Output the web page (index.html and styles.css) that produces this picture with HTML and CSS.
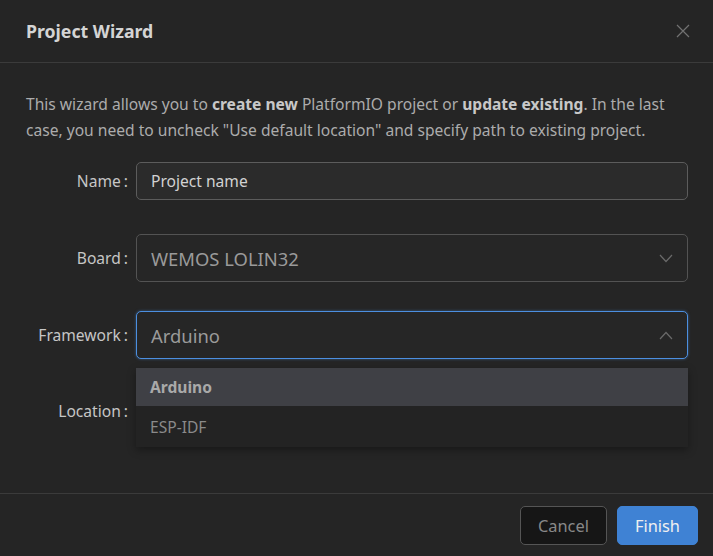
FILE: index.html
```html
<!DOCTYPE html>
<html lang="en">
<head>
    <meta charset="UTF-8" />
    <title>Project Wizard</title>
    <link rel="stylesheet" href="styles.css">
</head>
<body>
    <div class="modal">
        <div class="modal-header">
            <span class="modal-title">Project Wizard</span>
            <svg class="close-icon" width="14" height="14" viewBox="0 0 14 14">
                <path d="M1 1 L13 13 M13 1 L1 13" stroke="#727272" stroke-width="1.2" fill="none"/>
            </svg>
        </div>

        <div class="modal-body">
            <p class="intro">This wizard allows you to <b>create new</b> PlatformIO project or <b>update existing</b>. In the last case, you need to uncheck "Use default location" and specify path to existing project.</p>

            <div class="form">
                <div class="form-item item-name">
                    <label class="label">Name<span class="colon">:</span></label>
                    <div class="field">
                        <div class="input">Project name</div>
                    </div>
                </div>

                <div class="form-item item-board">
                    <label class="label">Board<span class="colon">:</span></label>
                    <div class="field">
                        <div class="select">
                            <span>WEMOS LOLIN32</span>
                            <svg width="14" height="9" viewBox="0 0 14 9"><path d="M1 1 L7 7.5 L13 1" stroke="#6a6a6a" stroke-width="1.2" fill="none"/></svg>
                        </div>
                    </div>
                </div>

                <div class="form-item item-framework">
                    <label class="label">Framework<span class="colon">:</span></label>
                    <div class="field">
                        <div class="select open">
                            <span>Arduino</span>
                            <svg width="14" height="9" viewBox="0 0 14 9"><path d="M1 8 L7 1.5 L13 8" stroke="#6a6a6a" stroke-width="1.2" fill="none"/></svg>
                        </div>
                        <ul class="dropdown">
                            <li class="active">Arduino</li>
                            <li>ESP-IDF</li>
                        </ul>
                    </div>
                </div>

                <div class="form-item">
                    <label class="label">Location<span class="colon">:</span></label>
                    <div class="field">
                        <div class="input"></div>
                    </div>
                </div>
            </div>
        </div>

        <div class="modal-footer">
            <button class="btn">Cancel</button>
            <button class="btn btn-primary">Finish</button>
        </div>
    </div>
</body>
</html>
```

FILE: styles.css
```css
body {
    margin: 0;
    background: #252525;
    font-family: "Noto Sans", "Open Sans", sans-serif;
    color: #b4b4b4;
}
.modal {
    width: 713px;
    height: 556px;
    display: flex;
    flex-direction: column;
}
.modal-header {
    height: 63px;
    border-bottom: 1px solid #3b3b3b;
    display: flex;
    align-items: center;
    justify-content: space-between;
    padding: 0 23px 0 26px;
    box-sizing: border-box;
}
.modal-title {
    font-size: 17.7px;
    font-weight: bold;
    color: #d4d4d4;
}
.modal-body {
    flex: 1;
    padding: 28px 25px 0 26px;
    overflow: hidden;
}
.intro {
    margin: 0 0 19px;
    font-size: 15.6px;
    line-height: 26px;
    color: #acacac;
}
.intro b {
    color: #c8c8c8;
}
.form-item {
    display: grid;
    grid-template-columns: 102px 1fr;
    column-gap: 8px;
    align-items: center;
}
.item-name {
    margin-bottom: 34px;
}
.item-board {
    margin-bottom: 29px;
}
.item-framework {
    margin-bottom: 33px;
}
.label {
    text-align: right;
    font-size: 15.6px;
    color: #c6c6c6;
}
.colon {
    margin-left: 3px;
}
.field {
    position: relative;
}
.input {
    height: 38px;
    box-sizing: border-box;
    border: 1px solid #5c5c5c;
    border-radius: 5px;
    background: #2b2b2b;
    padding: 0 14px;
    display: flex;
    align-items: center;
    font-size: 15.6px;
    color: #d2d2d2;
}
.select {
    height: 48px;
    box-sizing: border-box;
    border: 1px solid #535353;
    border-radius: 5px;
    background: #262626;
    padding: 0 14px;
    display: flex;
    align-items: center;
    justify-content: space-between;
    font-size: 18.4px;
    color: #9a9a9a;
}
.select.open {
    border-color: #4c8fe0;
    box-shadow: 0 0 3px rgba(76, 143, 224, 0.5);
}
.dropdown {
    position: absolute;
    left: 0;
    right: 0;
    top: 57px;
    margin: 0;
    padding: 0;
    list-style: none;
    background: #232323;
    box-shadow: 0 3px 8px rgba(0, 0, 0, 0.35);
    z-index: 2;
}
.dropdown li {
    height: 41px;
    padding: 0 14px;
    display: flex;
    align-items: center;
    font-size: 15.6px;
    color: #8a8a8a;
}
.dropdown li.active {
    height: 38px;
    background: #3f4045;
    font-weight: bold;
    color: #a9a9a9;
}
.modal-footer {
    height: 62px;
    border-top: 1px solid #3b3b3b;
    display: flex;
    align-items: center;
    justify-content: flex-end;
    gap: 10px;
    padding: 0 15px 0 0;
}
.btn {
    height: 39px;
    padding: 0 17px;
    font-family: inherit;
    font-size: 16.4px;
    border: 1px solid #555;
    border-radius: 5px;
    background: #161616;
    color: #888;
}
.btn-primary {
    background: #3f82d4;
    border-color: #3f82d4;
    color: #f0f0f0;
}
```
